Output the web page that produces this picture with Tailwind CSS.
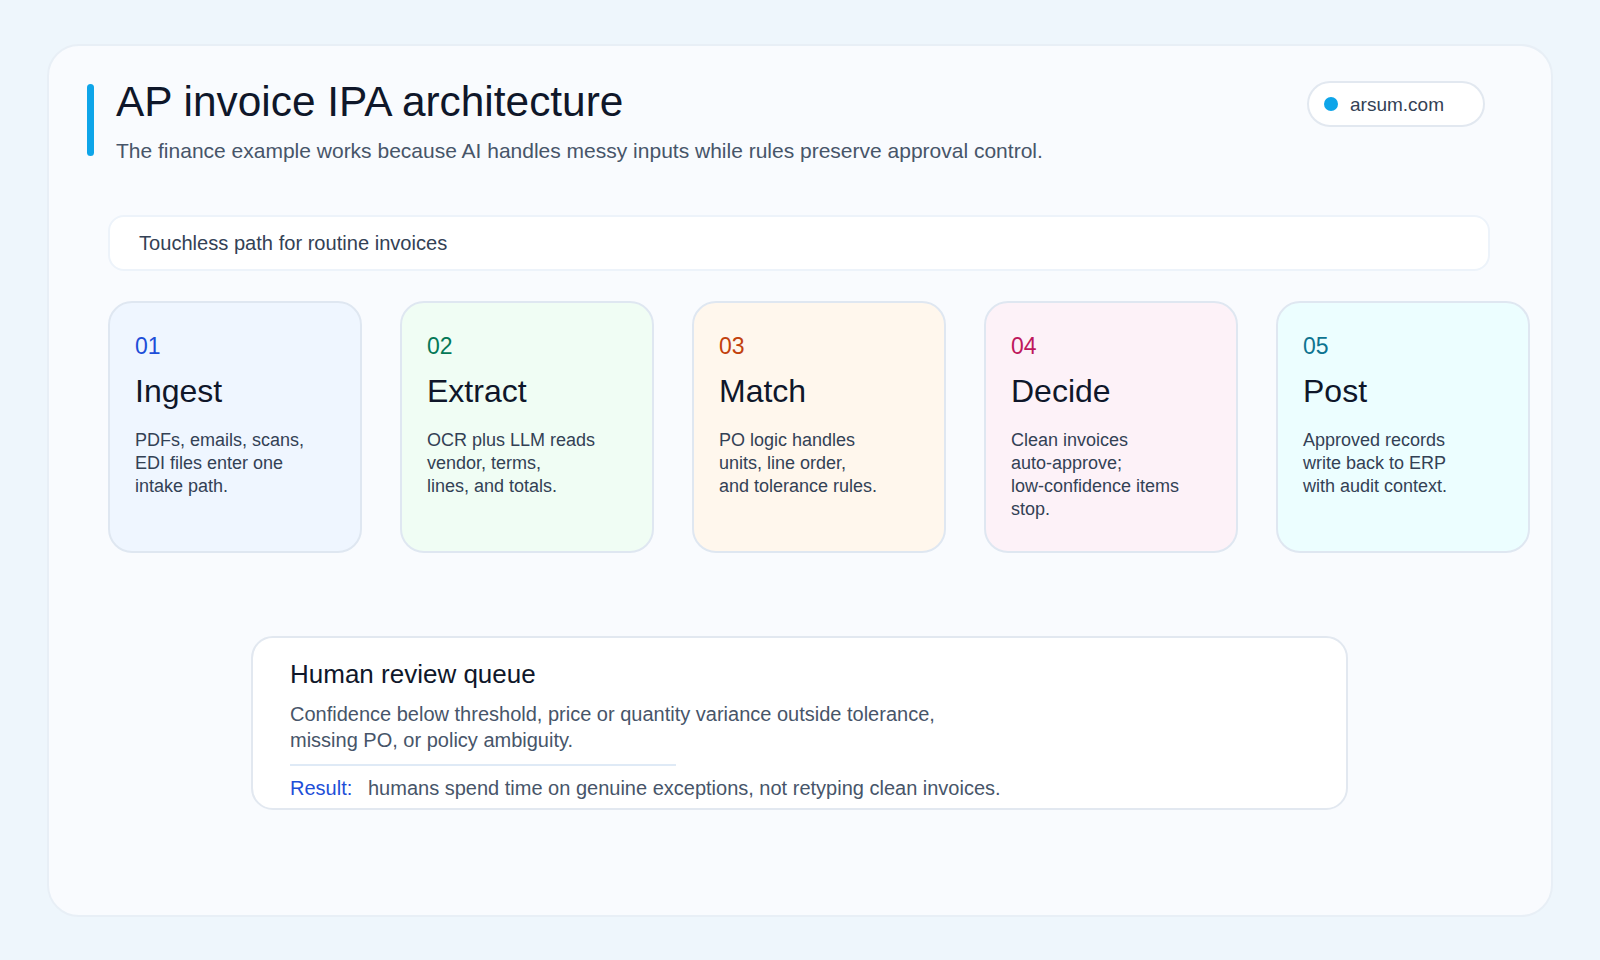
<!DOCTYPE html>
<html lang="en">

<head>
    <meta charset="UTF-8">
    <meta name="viewport" content="width=device-width, initial-scale=1.0">
    <script src="https://cdn.jsdelivr.net/npm/@tailwindcss/browser@4"></script>
    <title>AP invoice IPA architecture</title>
</head>

<body class="bg-[#eef6fc] font-['Liberation_Sans',Arial,sans-serif]">

    <div class="w-[1600px] h-[960px] px-[47px] pt-[44px] overflow-hidden">
        <main class="h-[873px] rounded-[32px] border-2 border-[#e8eff6] bg-[#f9fbfe] pl-[38px] pt-[38px]">

            <!-- Header -->
            <header class="flex h-[72px]">
                <div class="w-[7px] h-[72px] rounded-full bg-[#0ea5e9]"></div>
                <div class="ml-[22px] w-[1191px]">
                    <h1 class="text-[42.4px] leading-[36px] text-[#0f172a]">AP invoice IPA architecture</h1>
                    <p class="text-[21px] leading-[28px] text-[#475569] mt-[17px]">The finance example works because AI handles messy inputs while rules preserve approval control.</p>
                </div>
                <div class="flex items-center w-[178px] h-[46px] mt-[-3px] rounded-full border-2 border-[#e2e8f0] bg-white pl-[15px]">
                    <span class="w-[14px] h-[14px] rounded-full bg-[#0ea5e9]"></span>
                    <span class="ml-[12px] text-[19px] text-[#334155] mt-[3px]">arsum.com</span>
                </div>
            </header>

            <!-- Touchless path -->
            <div class="flex items-center ml-[21px] mt-[59px] w-[1382px] h-[56px] rounded-[16px] border-2 border-[#edf3fa] bg-white pl-[29px]">
                <span class="text-[20.1px] text-[#334155] mt-[1px]">Touchless path for routine invoices</span>
            </div>

            <!-- Steps -->
            <div class="flex gap-[38px] ml-[21px] mt-[30px]">
                <section class="shrink-0 w-[254px] h-[252px] rounded-[24px] border-2 border-[#dfe7f1] bg-[#eff6ff] pl-[25px] pt-[29px]">
                    <div class="text-[23px] leading-[28px] text-[#1d4ed8]">01</div>
                    <h2 class="text-[32px] leading-[38px] text-[#0f172a] mt-[12px]">Ingest</h2>
                    <p class="text-[18px] leading-[23px] text-[#334155] mt-[19px]">PDFs, emails, scans,<br>EDI files enter one<br>intake path.</p>
                </section>
                <section class="shrink-0 w-[254px] h-[252px] rounded-[24px] border-2 border-[#dfe7f1] bg-[#f0fdf4] pl-[25px] pt-[29px]">
                    <div class="text-[23px] leading-[28px] text-[#047857]">02</div>
                    <h2 class="text-[32px] leading-[38px] text-[#0f172a] mt-[12px]">Extract</h2>
                    <p class="text-[18px] leading-[23px] text-[#334155] mt-[19px]">OCR plus LLM reads<br>vendor, terms,<br>lines, and totals.</p>
                </section>
                <section class="shrink-0 w-[254px] h-[252px] rounded-[24px] border-2 border-[#dfe7f1] bg-[#fff7ed] pl-[25px] pt-[29px]">
                    <div class="text-[23px] leading-[28px] text-[#c2410c]">03</div>
                    <h2 class="text-[32px] leading-[38px] text-[#0f172a] mt-[12px]">Match</h2>
                    <p class="text-[18px] leading-[23px] text-[#334155] mt-[19px]">PO logic handles<br>units, line order,<br>and tolerance rules.</p>
                </section>
                <section class="shrink-0 w-[254px] h-[252px] rounded-[24px] border-2 border-[#dfe7f1] bg-[#fdf2f8] pl-[25px] pt-[29px]">
                    <div class="text-[23px] leading-[28px] text-[#be185d]">04</div>
                    <h2 class="text-[32px] leading-[38px] text-[#0f172a] mt-[12px]">Decide</h2>
                    <p class="text-[18px] leading-[23px] text-[#334155] mt-[19px]">Clean invoices<br>auto-approve;<br>low-confidence items<br>stop.</p>
                </section>
                <section class="shrink-0 w-[254px] h-[252px] rounded-[24px] border-2 border-[#dfe7f1] bg-[#ecfeff] pl-[25px] pt-[29px]">
                    <div class="text-[23px] leading-[28px] text-[#0e7490]">05</div>
                    <h2 class="text-[32px] leading-[38px] text-[#0f172a] mt-[12px]">Post</h2>
                    <p class="text-[18px] leading-[23px] text-[#334155] mt-[19px]">Approved records<br>write back to ERP<br>with audit context.</p>
                </section>
            </div>

            <!-- Review queue -->
            <section class="ml-[164px] mt-[83px] w-[1097px] h-[174px] rounded-[22px] border-2 border-[#e2e8f0] bg-white pl-[37px] pt-[20px]">
                <h3 class="text-[26px] leading-[32px] text-[#0f172a]">Human review queue</h3>
                <p class="text-[20px] leading-[26px] text-[#475569] mt-[11px]">Confidence below threshold, price or quantity variance outside tolerance,<br>missing PO, or policy ambiguity.</p>
                <div class="w-[386px] h-[2px] bg-[#dfeaf6] mt-[11px]"></div>
                <p class="flex text-[20px] leading-[26px] text-[#475569] mt-[9px]">
                    <span class="w-[78px] text-[#1d4ed8]">Result:</span>
                    <span>humans spend time on genuine exceptions, not retyping clean invoices.</span>
                </p>
            </section>

        </main>
    </div>

</body>

</html>
